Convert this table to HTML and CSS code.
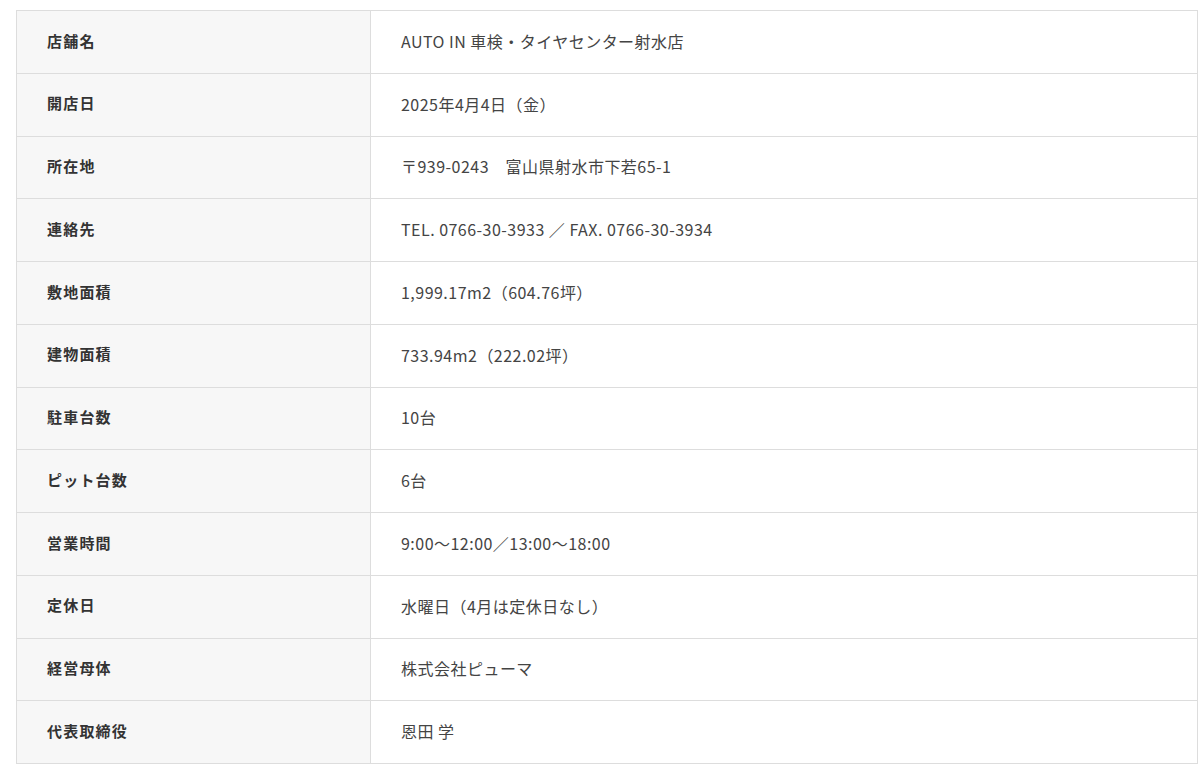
FILE: index.html
```html
<!DOCTYPE html>
<html lang="ja">
<head>
<meta charset="utf-8">
<link rel="stylesheet" href="styles.css">
</head>
<body>
<table class="info">
<tbody>
<tr><th>店舗名</th><td>AUTO IN 車検・タイヤセンター射水店</td></tr>
<tr><th>開店日</th><td>2025年4月4日（金）</td></tr>
<tr><th>所在地</th><td>〒939-0243　富山県射水市下若65-1</td></tr>
<tr><th>連絡先</th><td>TEL. 0766-30-3933 ／ FAX. 0766-30-3934</td></tr>
<tr><th>敷地面積</th><td>1,999.17m2（604.76坪）</td></tr>
<tr><th>建物面積</th><td>733.94m2（222.02坪）</td></tr>
<tr><th>駐車台数</th><td>10台</td></tr>
<tr><th>ピット台数</th><td>6台</td></tr>
<tr><th>営業時間</th><td>9:00〜12:00／13:00〜18:00</td></tr>
<tr><th>定休日</th><td>水曜日（4月は定休日なし）</td></tr>
<tr><th>経営母体</th><td>株式会社ピューマ</td></tr>
<tr><th>代表取締役</th><td>恩田 学</td></tr>
</tbody>
</table>
</body>
</html>
```
FILE: styles.css
```css
html, body {
  margin: 0;
  padding: 0;
  background: #fff;
}
body {
  padding: 10px 2px 0 16px;
  font-family: "Noto Sans CJK JP", "Noto Sans", sans-serif;
  color: #333;
}
.info {
  width: 100%;
  border-collapse: collapse;
  border: 1px solid #ddd;
}
.info th,
.info td {
  border: 1px solid #ddd;
  height: 59.75px;
  padding: 0 0 2px 30px;
  vertical-align: middle;
  text-align: left;
  line-height: 1.5;
}
.info th {
  width: 323px;
  background: #f7f7f7;
  font-size: 15px;
  letter-spacing: 0.08em;
  font-weight: bold;
  color: #333;
}
.info td {
  font-size: 16px;
  letter-spacing: 0.03em;
  font-weight: normal;
  color: #444;
}
```
